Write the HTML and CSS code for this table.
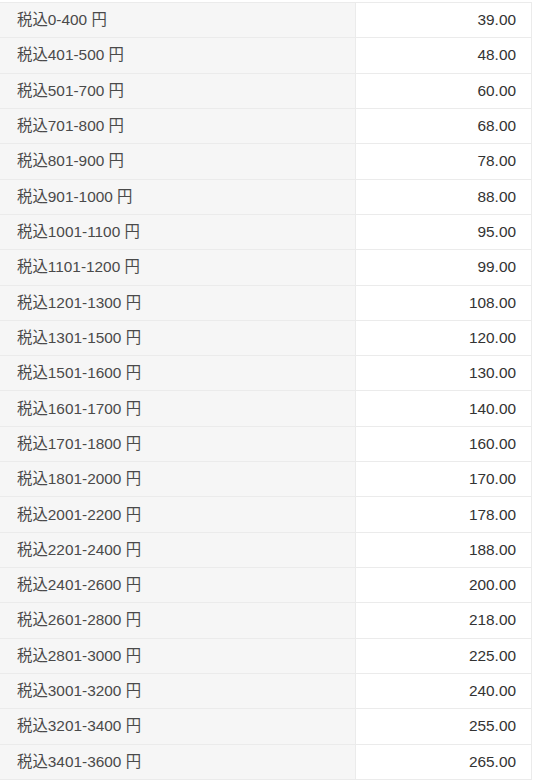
FILE: index.html
```html
<!DOCTYPE html>
<html lang="ja">
<head>
<meta charset="utf-8">
<link rel="stylesheet" href="styles.css">
</head>
<body>
<table class="price-table">
<tbody>
<tr><th>税込0-400 円</th><td>39.00</td></tr>
<tr><th>税込401-500 円</th><td>48.00</td></tr>
<tr><th>税込501-700 円</th><td>60.00</td></tr>
<tr><th>税込701-800 円</th><td>68.00</td></tr>
<tr><th>税込801-900 円</th><td>78.00</td></tr>
<tr><th>税込901-1000 円</th><td>88.00</td></tr>
<tr><th>税込1001-1100 円</th><td>95.00</td></tr>
<tr><th>税込1101-1200 円</th><td>99.00</td></tr>
<tr><th>税込1201-1300 円</th><td>108.00</td></tr>
<tr><th>税込1301-1500 円</th><td>120.00</td></tr>
<tr><th>税込1501-1600 円</th><td>130.00</td></tr>
<tr><th>税込1601-1700 円</th><td>140.00</td></tr>
<tr><th>税込1701-1800 円</th><td>160.00</td></tr>
<tr><th>税込1801-2000 円</th><td>170.00</td></tr>
<tr><th>税込2001-2200 円</th><td>178.00</td></tr>
<tr><th>税込2201-2400 円</th><td>188.00</td></tr>
<tr><th>税込2401-2600 円</th><td>200.00</td></tr>
<tr><th>税込2601-2800 円</th><td>218.00</td></tr>
<tr><th>税込2801-3000 円</th><td>225.00</td></tr>
<tr><th>税込3001-3200 円</th><td>240.00</td></tr>
<tr><th>税込3201-3400 円</th><td>255.00</td></tr>
<tr><th>税込3401-3600 円</th><td>265.00</td></tr>
</tbody>
</table>
</body>
</html>
```

FILE: styles.css
```css
html, body {
  margin: 0;
  padding: 0;
  background: #ffffff;
}

body {
  padding-top: 2px;
  font-family: "Liberation Sans", "Noto Sans CJK JP", sans-serif;
  font-size: 15.4px;
}

.price-table {
  border-collapse: collapse;
  width: 532px;
  table-layout: fixed;
}

.price-table tr {
  height: 35.32px;
}

.price-table th,
.price-table td {
  border-top: 1px solid #ebebeb;
  border-bottom: 1px solid #ebebeb;
  padding: 0;
  vertical-align: middle;
  line-height: 18px;
}

.price-table th {
  width: 355px;
  background: #f6f6f6;
  color: #4a4a4a;
  font-weight: normal;
  text-align: left;
  padding-left: 17px;
  box-sizing: border-box;
  border-right: 1px solid #ebebeb;
}

.price-table td {
  background: #ffffff;
  color: #333333;
  text-align: right;
  padding-right: 15px;
  border-right: 1px solid #ebebeb;
}
```
